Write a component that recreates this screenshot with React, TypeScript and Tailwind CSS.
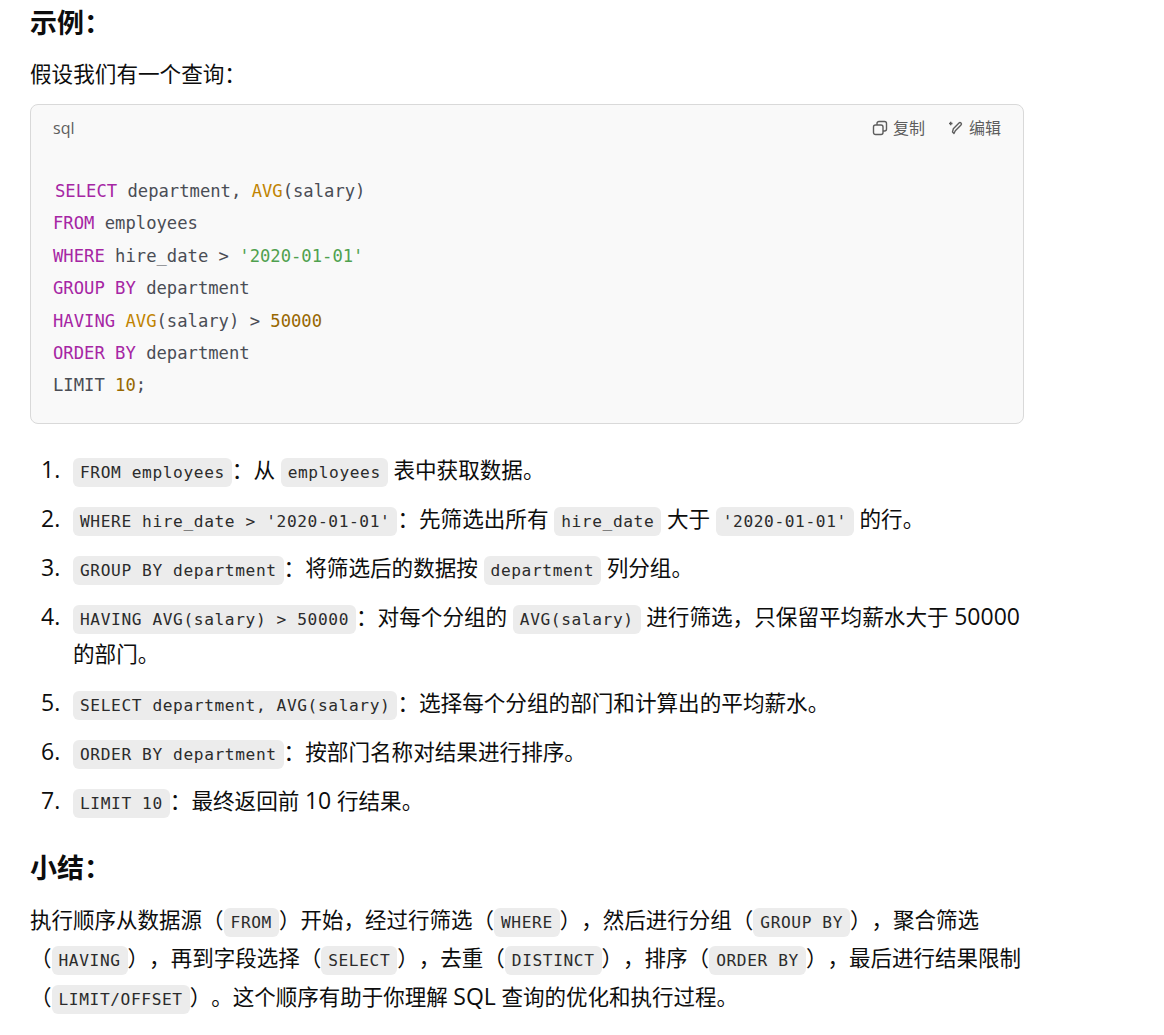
import React from 'react';

const sans = 'font-["Open_Sans","Noto_Sans_CJK_SC",sans-serif]';

// full-width punctuation, as in the source text
const CO = '\uFF1A';
const CM = '\uFF0C';
const LP = '\uFF08';
const RP = '\uFF09';
const EN = '\u3002';

const C: React.FC<{ children: React.ReactNode }> = ({ children }) => (
  <code className='font-["DejaVu_Sans_Mono","Noto_Sans_CJK_SC",monospace] text-[16.2px] text-[#2b2b2b] bg-[#ececec] rounded-md px-[7px] py-[5px] leading-none tracking-[0.6px]'>
    {children}
  </code>
);

const L: React.FC<{ children: React.ReactNode }> = ({ children }) => <span className="text-[23px]">{children}</span>;
const Kw: React.FC<{ children: React.ReactNode }> = ({ children }) => <span className="text-[#a626a4]">{children}</span>;
const Fn: React.FC<{ children: React.ReactNode }> = ({ children }) => <span className="text-[#c18401]">{children}</span>;
const Num: React.FC<{ children: React.ReactNode }> = ({ children }) => <span className="text-[#986801]">{children}</span>;
const Str: React.FC<{ children: React.ReactNode }> = ({ children }) => <span className="text-[#50a14f]">{children}</span>;

const steps: React.ReactNode[] = [
  <><C>FROM employees</C>{CO}从 <C>employees</C> 表中获取数据{EN}</>,
  <><C>WHERE hire_date &gt; '2020-01-01'</C>{CO}先筛选出所有 <C>hire_date</C> 大于 <C>'2020-01-01'</C> 的行{EN}</>,
  <><C>GROUP BY department</C>{CO}将筛选后的数据按 <C>department</C> 列分组{EN}</>,
  <><C>HAVING AVG(salary) &gt; 50000</C>{CO}对每个分组的 <C>AVG(salary)</C> 进行筛选{CM}只保留平均薪水大于 <L>50000</L> 的部门{EN}</>,
  <><C>SELECT department, AVG(salary)</C>{CO}选择每个分组的部门和计算出的平均薪水{EN}</>,
  <><C>ORDER BY department</C>{CO}按部门名称对结果进行排序{EN}</>,
  <><C>LIMIT 10</C>{CO}最终返回前 <L>10</L> 行结果{EN}</>,
];

export default function App() {
  return (
    <div className={`${sans} w-[1164px] h-[1035px] overflow-hidden bg-white text-[#0d0d0d] text-[21.6px] leading-[38px] [text-spacing-trim:space-all]`}>
      <div className="w-[994px] ml-[30px]">
        <h3 className="text-[27px] font-bold leading-[46px]">示例{CO}</h3>
        <p className="mt-[9px] leading-[38px]">假设我们有一个查询{CO}</p>
        <div className="mt-[11px] h-[320px] rounded-lg border border-[#d9d9d9] bg-[#f9f9f9]">
          <div className="flex items-center justify-between h-[46px] px-[22px] text-[16px] leading-none text-[#5d5d5d]">
            <span>sql</span>
            <div className="flex items-center gap-[23px]">
              <span className="flex items-center gap-[5px]">
                <svg width="16" height="16" viewBox="0 0 16 16" fill="none" stroke="#5d5d5d" strokeWidth="1.4">
                  <rect x="1.5" y="5" width="9.5" height="9.5" rx="2" />
                  <path d="M5 5V3.5a2 2 0 0 1 2-2h5.5a2 2 0 0 1 2 2V9a2 2 0 0 1-2 2H11" />
                </svg>
                复制
              </span>
              <span className="flex items-center gap-[5px]">
                <svg width="16" height="16" viewBox="0 0 16 16" fill="none" stroke="#5d5d5d" strokeWidth="1.4" strokeLinejoin="round">
                  <path d="M6 13.5 4.5 12l.8-3.2 5.7-5.7a1.4 1.4 0 0 1 2 2l-5.7 5.7z" />
                  <path d="M1 3.5h3.5M2.7 1.8v3.4" />
                </svg>
                编辑
              </span>
            </div>
          </div>
          <pre className='mt-[24px] pl-[22px] font-["DejaVu_Sans_Mono",monospace] text-[17.2px] leading-[32.4px] text-[#4a4d55]'>
            <span className="ml-[2px]"><Kw>SELECT</Kw> department, <Fn>AVG</Fn>(salary){'\n'}</span>
            <Kw>FROM</Kw> employees{'\n'}
            <Kw>WHERE</Kw> hire_date &gt; <Str>'2020-01-01'</Str>{'\n'}
            <Kw>GROUP BY</Kw> department{'\n'}
            <Kw>HAVING</Kw> <Fn>AVG</Fn>(salary) &gt; <Num>50000</Num>{'\n'}
            <Kw>ORDER BY</Kw> department{'\n'}
            LIMIT <Num>10</Num>;
          </pre>
        </div>
        <ol className="mt-[27px] leading-[37px] flex flex-col gap-[12px]">
          {steps.map((step, i) => (
            <li key={i} className="flex">
              <span className="w-[43px] shrink-0 pl-[11px] text-[23px]">{i + 1}.</span>
              <div>{step}</div>
            </li>
          ))}
        </ol>
        <h3 className="mt-[26px] text-[27px] font-bold leading-[46px]">小结{CO}</h3>
        <p className="mt-[10px] text-[21.5px] leading-[38px]">
          执行顺序从数据源{LP}<C>FROM</C>{RP}开始{CM}经过行筛选{LP}<C>WHERE</C>{RP}{CM}然后进行分组{LP}<C>GROUP BY</C>{RP}{CM}聚合筛选{LP}<C>HAVING</C>{RP}{CM}再到字段选择{LP}<C>SELECT</C>{RP}{CM}去重{LP}<C>DISTINCT</C>{RP}{CM}排序{LP}<C>ORDER BY</C>{RP}{CM}最后进行结果限制{LP}<C>LIMIT/OFFSET</C>{RP}{EN}这个顺序有助于你理解 <L>SQL</L> 查询的优化和执行过程{EN}
        </p>
      </div>
    </div>
  );
}
